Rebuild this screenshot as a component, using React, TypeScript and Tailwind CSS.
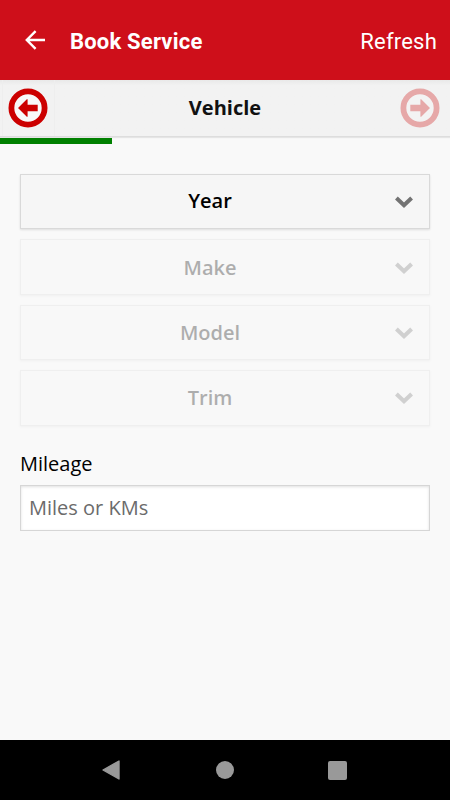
import { useState } from "react";
import clsx from "clsx";

const selects = [
  { label: "Year", box: "h-[55px]", text: "pb-[2px]", disabled: false },
  { label: "Make", box: "h-14 pt-px", text: "", disabled: true },
  { label: "Model", box: "h-[55px]", text: "", disabled: true },
  { label: "Trim", box: "h-14", text: "", disabled: true },
];

function CircleArrow({ className }: { className?: string }) {
  return (
    <svg viewBox="0 0 40 40" className={clsx("size-10", className)}>
      <circle cx="20" cy="20" r="16.6" fill="#f8f8f8" stroke="#cc0000" strokeWidth="5.8" />
      <path d="M10 20 18.8 11.2h.8v5.6h10.1v6.4H19.6v5.6h-.8z" fill="#cc0000" />
    </svg>
  );
}

type SelectButtonProps = { label: string; box: string; text: string; disabled: boolean };

function SelectButton({ label, box, text, disabled }: SelectButtonProps) {
  return (
    <button
      disabled={disabled}
      className={clsx(
        "flex w-full items-center border border-[#d9d9d9] bg-[#f6f6f6] shadow-[0_1px_2px_rgba(0,0,0,0.11)]",
        box,
        disabled && "opacity-30"
      )}
    >
      <span className={clsx("w-[378px] shrink-0 text-center text-[20px] font-[560] text-black", text)}>{label}</span>
      <svg viewBox="0 0 18 12" className="-ml-[4px] h-3 w-[18px] shrink-0">
        <path d="M1.4 2 9 9.2 16.6 2" fill="none" stroke="#737373" strokeWidth="4" />
      </svg>
    </button>
  );
}

export default function App() {
  const [mileage, setMileage] = useState("");

  return (
    <div className="flex h-[800px] w-[450px] flex-col overflow-hidden bg-[#f9f9f9] font-['Open_Sans',sans-serif] text-black">
      <header className="flex h-20 shrink-0 items-center bg-[#ce0f1a] pt-[3px] pr-[13px] pl-[25px] font-['Roboto',sans-serif] text-[22px] text-white">
        <svg viewBox="0 0 20 20" className="-mt-[3px] size-5">
          <path d="M20 10H2M10.6 1.2 1.8 10l8.8 8.8" fill="none" stroke="currentColor" strokeWidth="2.4" />
        </svg>
        <h1 className="ml-[25px] font-bold tracking-[0.2px]">Book Service</h1>
        <button className="ml-auto tracking-[0.2px]">Refresh</button>
      </header>

      <div className="flex h-[57px] shrink-0 items-center border-b border-[#dddddd] bg-gradient-to-b from-[#e9e9e9] via-[#f2f2f2] via-10% to-[#f2f2f2] shadow-[0_1px_1px_rgba(0,0,0,0.08)]">
        <button className="ml-[2px] flex h-full w-[53px] items-center justify-center border-x border-[#eeeeee]">
          <CircleArrow className="-ml-[1px]" />
        </button>
        <h2 className="flex-1 pr-[5px] text-center text-[20px] font-bold text-[#111111]">Vehicle</h2>
        <button disabled className="mr-[10px] opacity-30">
          <CircleArrow className="rotate-180" />
        </button>
      </div>
      <div className="mt-px h-[6px] w-[112px] shrink-0 bg-[#008000]" />

      <main className="flex-1 px-5 pt-[30px]">
        <div className="flex flex-col gap-[10px]">
          {selects.map((s) => (
            <SelectButton key={s.label} {...s} />
          ))}
        </div>
        <label htmlFor="mileage" className="mt-6 block text-[20px] leading-7">
          Mileage
        </label>
        <input
          id="mileage"
          value={mileage}
          onChange={(e) => setMileage(e.target.value)}
          placeholder="Miles or KMs"
          className="mt-[7px] block h-[46px] w-full border border-[#d6d6d6] bg-white px-2 pb-[2px] text-[20px] shadow-[inset_0_1px_3px_rgba(0,0,0,0.12)] placeholder:text-[#6b6b6b]"
        />
      </main>

      <nav className="flex h-[60px] shrink-0 items-center bg-black pl-[102px]">
        <svg viewBox="0 0 18 20" className="h-5 w-[18px]">
          <path d="M17 1v18L1 10z" fill="#999999" stroke="#999999" strokeWidth="1.4" strokeLinejoin="round" />
        </svg>
        <span className="ml-[96px] size-[18px] rounded-full bg-[#999999]" />
        <span className="ml-[94px] size-[19px] rounded-[2px] bg-[#999999]" />
      </nav>
    </div>
  );
}
